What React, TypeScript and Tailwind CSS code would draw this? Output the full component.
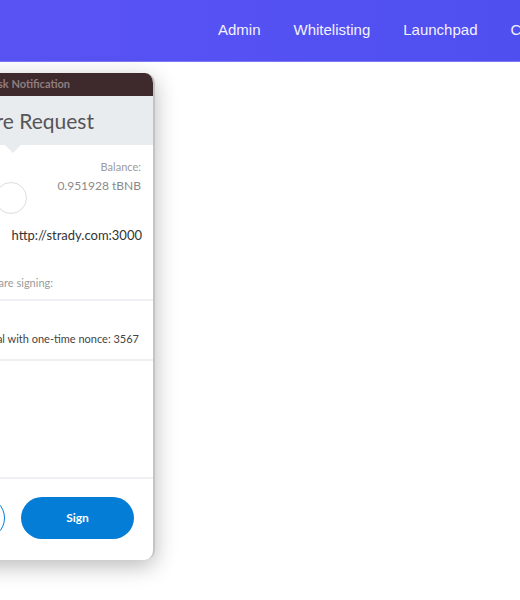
import React from "react";

const links = ["Admin", "Whitelisting", "Launchpad", "Contact"];

function NavBar() {
  return (
    <div className="h-[62px] bg-gradient-to-r from-[#5a53f4] to-[#4f4ff0] border-b border-[#7b78f3] flex items-center pl-[218px] gap-[33px] overflow-hidden whitespace-nowrap">
      {links.map((l) => (
        <span key={l} className="text-[15px] text-[#f3f2ff] font-['Liberation_Sans',Arial,sans-serif]">
          {l}
        </span>
      ))}
    </div>
  );
}

function SignWindow() {
  return (
    <div className="absolute left-[-205px] top-[73px] w-[360px] h-[487px] rounded-[10px] bg-white flex flex-col overflow-hidden border-r-2 border-[#c4c4c4] shadow-[0_6px_22px_rgba(0,0,0,0.28)] font-['Lato','Noto_Sans',sans-serif]">
      {/* title bar */}
      <div className="h-[23px] bg-[#3e2a2d] flex items-center justify-end pr-[83px]">
        <span className="text-[11px] font-bold text-[#8f7e80] whitespace-nowrap">MetaMask Notification</span>
      </div>

      {/* header */}
      <div className="h-[49px] bg-[#e9ecef] flex items-center justify-end pr-[59px]">
        <span className="text-[21px] text-[#555658] whitespace-nowrap">Signature Request</span>
      </div>
      <div className="absolute left-[210px] top-[72px] w-0 h-0 border-l-[8px] border-r-[8px] border-t-[8px] border-l-transparent border-r-transparent border-t-[#e9ecef]" />

      {/* account row */}
      <div className="h-[78px] flex justify-end items-start pr-[12px] pt-[12px]">
        <div className="w-[32px] h-[32px] rounded-full border border-[#dcdcdc] mt-[25px] mr-[30px]" />
        <div className="text-right leading-[19px]">
          <div className="text-[11px] text-[#9b9b9b]">Balance:</div>
          <div className="text-[12px] text-[#8a8a8a] whitespace-nowrap">0.951928 tBNB</div>
        </div>
      </div>

      {/* origin */}
      <div className="h-[26px] flex items-center justify-end pr-[11px] text-[13px] text-[#333] whitespace-nowrap">
        <span className="text-[#666] mr-[16px]">Origin:</span>
        <span>http://strady.com:3000</span>
      </div>

      <div className="h-[26px] mt-[21px] flex items-center justify-end pr-[100px] text-[11px] text-[#9b9b9b] whitespace-nowrap">
        You are signing:
      </div>

      <div className="h-[2px] mt-[3px] bg-[#eef0f3]" />

      <div className="h-[58px] pt-[30px] flex justify-end pr-[14px] text-[11px] leading-[16px] text-[#444] whitespace-nowrap">
        <span className="text-[#888] mr-[8px]">Message:</span>
        <span>Sign in to Strady portal with one-time nonce: 3567</span>
      </div>

      <div className="h-[2px] bg-[#eef0f3]" />

      <div className="flex-1" />

      <div className="h-[2px] bg-[#eef0f3]" />

      <div className="h-[81px] flex items-start pt-[18px] justify-end pr-[19px] gap-[16px]">
        <button className="w-[113px] h-[42px] rounded-full border border-[#037dd6] text-[#037dd6] text-[12px] font-bold bg-white">
          Cancel
        </button>
        <button className="w-[113px] h-[42px] rounded-full bg-[#037dd6] text-white text-[12px] font-bold">
          Sign
        </button>
      </div>
    </div>
  );
}

export default function App() {
  return (
    <div className="relative w-[520px] h-[600px] bg-white overflow-hidden">
      <NavBar />
      <SignWindow />
    </div>
  );
}
